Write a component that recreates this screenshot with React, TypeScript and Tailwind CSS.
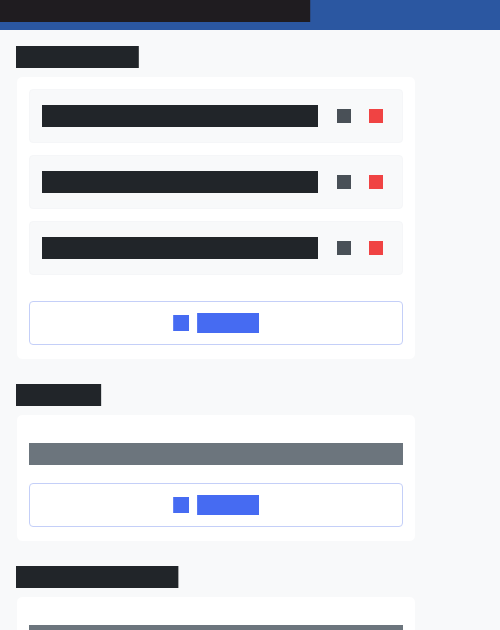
import React from "react";

function Title({ className }: { className: string }) {
  return <div className={`h-[22px] border-r bg-[#212529] ${className}`} />;
}

function Row() {
  return (
    <div className="flex h-[54px] items-center rounded-[4px] border border-[#f5f6f8] bg-[#f8f9fa] pl-3">
      <div className="h-[22px] w-[276px] bg-[#212529]" />
      <div className="ml-[19px] size-[14px] bg-[#495057]" />
      <div className="ml-[18px] size-[14px] bg-[#f04343]" />
    </div>
  );
}

function AddButton() {
  return (
    <button className="flex h-11 w-full items-center justify-center gap-2 rounded-[4px] border border-[#c4cff8] bg-white">
      <span className="size-4 border-l border-[#6584f5] bg-[#466bf2]" />
      <span className="h-5 w-[62px] border-l border-[#5b7bf4] bg-[#466bf2]" />
    </button>
  );
}

export default function App() {
  return (
    <div className="h-[630px] overflow-hidden bg-[#f8f9fa]">
      <header className="h-[30px] bg-[#2b57a1]">
        <div className="h-[22px] w-[311px] border-r border-[#2a4a84] bg-[#1f1c20]" />
      </header>
      <main className="w-[416px] pl-4 pt-4">
        <Title className="w-[123px] border-[#4a4d50]" />
        <section className="mt-2 h-[284px] rounded-[6px] border border-[#f8f9fa] bg-white px-3 pt-3">
          <div className="flex flex-col gap-3">
            <Row />
            <Row />
            <Row />
          </div>
          <div className="mt-[26px]">
            <AddButton />
          </div>
        </section>
        <div className="mt-6">
          <Title className="w-[86px] border-[#d6d8da]" />
        </div>
        <section className="mt-2 h-[128px] rounded-[6px] border border-[#f8f9fa] bg-white px-3 pt-7">
          <div className="mb-[18px] h-[22px] bg-[#6c757d]" />
          <AddButton />
        </section>
        <div className="mt-6">
          <Title className="w-[163px] border-[#a6a8aa]" />
        </div>
        <section className="mt-2 h-[128px] rounded-[6px] border border-[#f8f9fa] bg-white px-3 pt-7">
          <div className="h-[22px] bg-[#6c757d]" />
        </section>
      </main>
    </div>
  );
}
